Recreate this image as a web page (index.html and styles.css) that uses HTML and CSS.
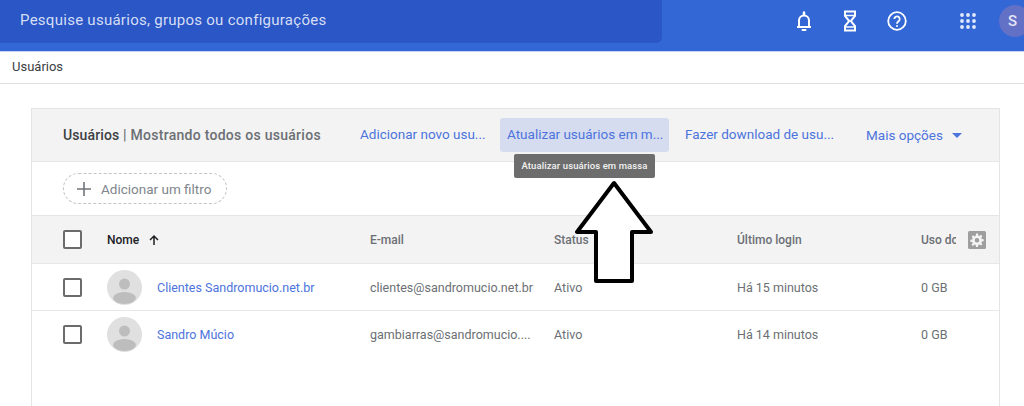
FILE: index.html
```html
<!DOCTYPE html>
<html lang="pt-BR">
<head>
<meta charset="utf-8">
<title>Usuários</title>
<link rel="stylesheet" href="styles.css">
</head>
<body>
<header class="topbar">
  <div class="search">Pesquise usuários, grupos ou configurações</div>
  <div class="top-icons">
    <svg class="ico bell" width="24" height="24" viewBox="0 0 24 24" fill="none" stroke="#fff" stroke-width="2"><path d="M5 18h14M7 18v-6.500a5 5 0 0 1 10 0V18"/><path d="M12 3.500v2" stroke-width="2.500" stroke-linecap="round"/><path d="M10.500 21h3" stroke-width="2" stroke-linecap="round"/></svg>
    <svg class="ico glass" width="24" height="24" viewBox="0 0 24 24" fill="none" stroke="#fff" stroke-width="2"><path d="M7 2.500h10v4.500l-4.200 5 4.200 5v4.500H7V17l4.200-5L7 7z"/><path d="M7 6.500h10M8 18h8" stroke-width="1.500"/></svg>
    <svg class="ico help" width="24" height="24" viewBox="0 0 24 24" fill="none" stroke="#fff"><circle cx="12" cy="12" r="8.800" stroke-width="1.800"/><path d="M9.300 10a2.700 2.700 0 1 1 4.300 2.200c-1 .8-1.600 1.200-1.600 2.600" stroke-width="1.800"/><circle cx="12" cy="17" r="1" fill="#fff" stroke="none"/></svg>
    <svg class="ico apps" width="16" height="16" viewBox="0 0 16 16" fill="#e3eafb"><circle cx="2" cy="2" r="1.900"/><circle cx="8" cy="2" r="1.900"/><circle cx="14" cy="2" r="1.900"/><circle cx="2" cy="8" r="1.900"/><circle cx="8" cy="8" r="1.900"/><circle cx="14" cy="8" r="1.900"/><circle cx="2" cy="14" r="1.900"/><circle cx="8" cy="14" r="1.900"/><circle cx="14" cy="14" r="1.900"/></svg>
    <div class="avatar-top">S</div>
  </div>
</header>
<nav class="crumb">Usuários</nav>
<main class="card">
  <div class="toolbar">
    <div class="title"><strong>Usuários</strong> | Mostrando todos os usuários</div>
    <a class="action a1">Adicionar novo usu...</a>
    <a class="action a2 active">Atualizar usuários em m...</a>
    <a class="action a3">Fazer download de usu...</a>
    <a class="action a4">Mais opções <i class="caret"></i></a>
  </div>
  <div class="filter-row">
    <div class="chip">
      <svg width="14" height="14" viewBox="0 0 14 14" stroke="#70757a" stroke-width="1.600"><path d="M7 0v14M0 7h14"/></svg>
      Adicionar um filtro
    </div>
  </div>
  <div class="row head">
    <span class="check"></span>
    <span class="c-name name-head">Nome
      <svg width="12" height="12" viewBox="0 0 12 12" fill="none" stroke="#202124" stroke-width="1.500"><path d="M6 11V2M2 6l4-4 4 4"/></svg>
    </span>
    <span class="c-mail">E-mail</span>
    <span class="c-status">Status</span>
    <span class="c-login">Último login</span>
    <span class="c-use clip">Uso do</span>
    <svg class="gear" width="18" height="18" viewBox="0 0 18 18"><rect width="18" height="18" rx="1.500" fill="#9e9e9e"/><path fill="#f3f3f3" d="M8 2.500h2l.3 1.900 1.100.5 1.600-1.100 1.400 1.400-1.100 1.600.5 1.100 1.900.3v2l-1.900.3-.5 1.100 1.100 1.600-1.400 1.400-1.600-1.100-1.100.5-.3 1.900H8l-.3-1.900-1.100-.5L5 15.100l-1.400-1.400 1.100-1.600-.5-1.100L2.300 10.700v-2l1.900-.3.500-1.100-1.100-1.600L5 4.300l1.600 1.100 1.100-.5zM9 7a2.300 2.300 0 1 0 0 4.600A2.300 2.300 0 0 0 9 7z"/></svg>
  </div>
  <div class="row">
    <span class="check"></span>
    <span class="c-name">
      <svg class="person" width="35" height="35" viewBox="0 0 35 35"><circle cx="17.500" cy="17.500" r="17.500" fill="#e0e0e0"/><circle cx="17.500" cy="14" r="5.500" fill="#bdbdbd"/><ellipse cx="17.500" cy="28" rx="11.500" ry="6" fill="#bdbdbd"/></svg>
      <a class="user">Clientes Sandromucio.net.br</a>
    </span>
    <span class="c-mail">clientes@sandromucio.net.br</span>
    <span class="c-status">Ativo</span>
    <span class="c-login">Há 15 minutos</span>
    <span class="c-use">0 GB</span>
  </div>
  <div class="row">
    <span class="check"></span>
    <span class="c-name">
      <svg class="person" width="35" height="35" viewBox="0 0 35 35"><circle cx="17.500" cy="17.500" r="17.500" fill="#e0e0e0"/><circle cx="17.500" cy="14" r="5.500" fill="#bdbdbd"/><ellipse cx="17.500" cy="28" rx="11.500" ry="6" fill="#bdbdbd"/></svg>
      <a class="user">Sandro Múcio</a>
    </span>
    <span class="c-mail">gambiarras@sandromucio....</span>
    <span class="c-status">Ativo</span>
    <span class="c-login">Há 14 minutos</span>
    <span class="c-use">0 GB</span>
  </div>
</main>
<div class="tooltip">Atualizar usuários em massa</div>
<svg class="arrow" width="82" height="104" viewBox="0 0 82 104" fill="#fff" stroke="#000" stroke-width="4" stroke-linejoin="round"><path d="M40 3L3 52h19v49h36V52h19z"/></svg>
</body>
</html>
```
FILE: styles.css
```css
* { box-sizing: border-box; }
html, body { margin: 0; height: 406px; overflow: hidden; }
body { font-family: Roboto, "Liberation Sans", sans-serif; background: #fff; color: #5f6368; font-size: 13px; position: relative; }

.topbar { height: 52px; background: #3367d6; border-bottom: 1px solid #c5d3f3; display: flex; justify-content: space-between; align-items: flex-start; }
.search { width: 662px; height: 43px; background: #2a56c6; border-radius: 0 0 6px 0; color: #d5def5; font-size: 15px; letter-spacing: .27px; padding: 11px 0 0 20px; line-height: 18px; }
.top-icons { display: flex; align-items: center; height: 41px; }
.ico { display: block; flex: none; }
.bell { margin-right: 22px; }
.glass { margin-right: 23px; }
.help { margin-right: 51px; }
.apps { margin-right: 23px; }
.avatar-top { width: 32px; height: 32px; border-radius: 50%; background: #6270c6; color: #e4e4f6; font-size: 15px; font-weight: 500; padding: 7px 0 0 9px; line-height: 18px; margin-right: -7px; flex: none; }

.crumb { height: 32px; border-bottom: 1px solid #e0e0e0; color: #3c4043; font-size: 13px; line-height: 30px; padding-left: 12px; }

.card { margin: 24px 24px 0 31px; height: 300px; border: 1px solid #e4e4e4; border-bottom: 0; }
.toolbar { height: 53px; background: #f3f3f3; border-bottom: 1px solid #e6e6e6; display: flex; align-items: center; padding-left: 31px; }
.title { width: 290px; font-size: 14px; font-weight: 500; color: #6b6f74; letter-spacing: .27px; flex: none; }
.title strong { color: #3c4043; font-weight: 500; letter-spacing: .12px; }
.action { color: #4d73dd; font-size: 13.500px; line-height: 32px; height: 34px; padding: 0 7px; border-radius: 3px; white-space: nowrap; flex: none; }
.a1 { width: 130px; }
.a2 { margin-left: 17px; width: 169px; }
.a2.active { background: #d5dcef; }
.a3 { margin-left: 9px; width: 148px; }
.a4 { margin-left: 33px; display: flex; align-items: center; line-height: 34px; }
.caret { width: 0; height: 0; border: 5px solid transparent; border-top-color: #4d73dd; border-bottom: 0; margin-left: 9px; }

.filter-row { height: 54px; border-bottom: 1px solid #e6e6e6; display: flex; align-items: center; padding-left: 31px; }
.chip { width: 164px; height: 31px; border: 1px dashed #c4c4c4; border-radius: 16px; display: flex; align-items: center; gap: 10px; padding-left: 13px; color: #80868b; font-size: 13.500px; }

.row { height: 47px; border-bottom: 1px solid #e8e8e8; display: flex; align-items: center; padding-left: 31px; position: relative; color: #6b6f74; font-size: 12.500px; }
.row.head { height: 48px; background: #f3f3f3; font-weight: 500; font-size: 12px; }
.row:last-child { border-bottom: 0; }
.check { width: 19px; height: 19px; border: 2px solid #6b6b6b; border-radius: 2px; flex: none; background: #fff; }
.c-name { width: 263px; margin-left: 25px; display: flex; align-items: center; flex: none; }
.name-head { color: #202124; gap: 9px; }
.person { display: block; margin-right: 15px; flex: none; }
.user { color: #4d73dd; }
.c-mail { width: 184px; flex: none; white-space: nowrap; }
.c-status { width: 183px; flex: none; }
.c-login { width: 184px; flex: none; }
.c-use { flex: none; }
.clip { width: 35px; overflow: hidden; white-space: nowrap; }
.gear { position: absolute; left: 936px; top: 15px; }

.tooltip { position: absolute; left: 514px; top: 154px; width: 141px; height: 24px; background: #6d6d6d; border-radius: 2px; color: #f2f2f2; font-size: 9.500px; font-weight: 500; line-height: 23px; text-align: center; letter-spacing: .1px; }
.arrow { position: absolute; left: 574px; top: 180px; }
```
